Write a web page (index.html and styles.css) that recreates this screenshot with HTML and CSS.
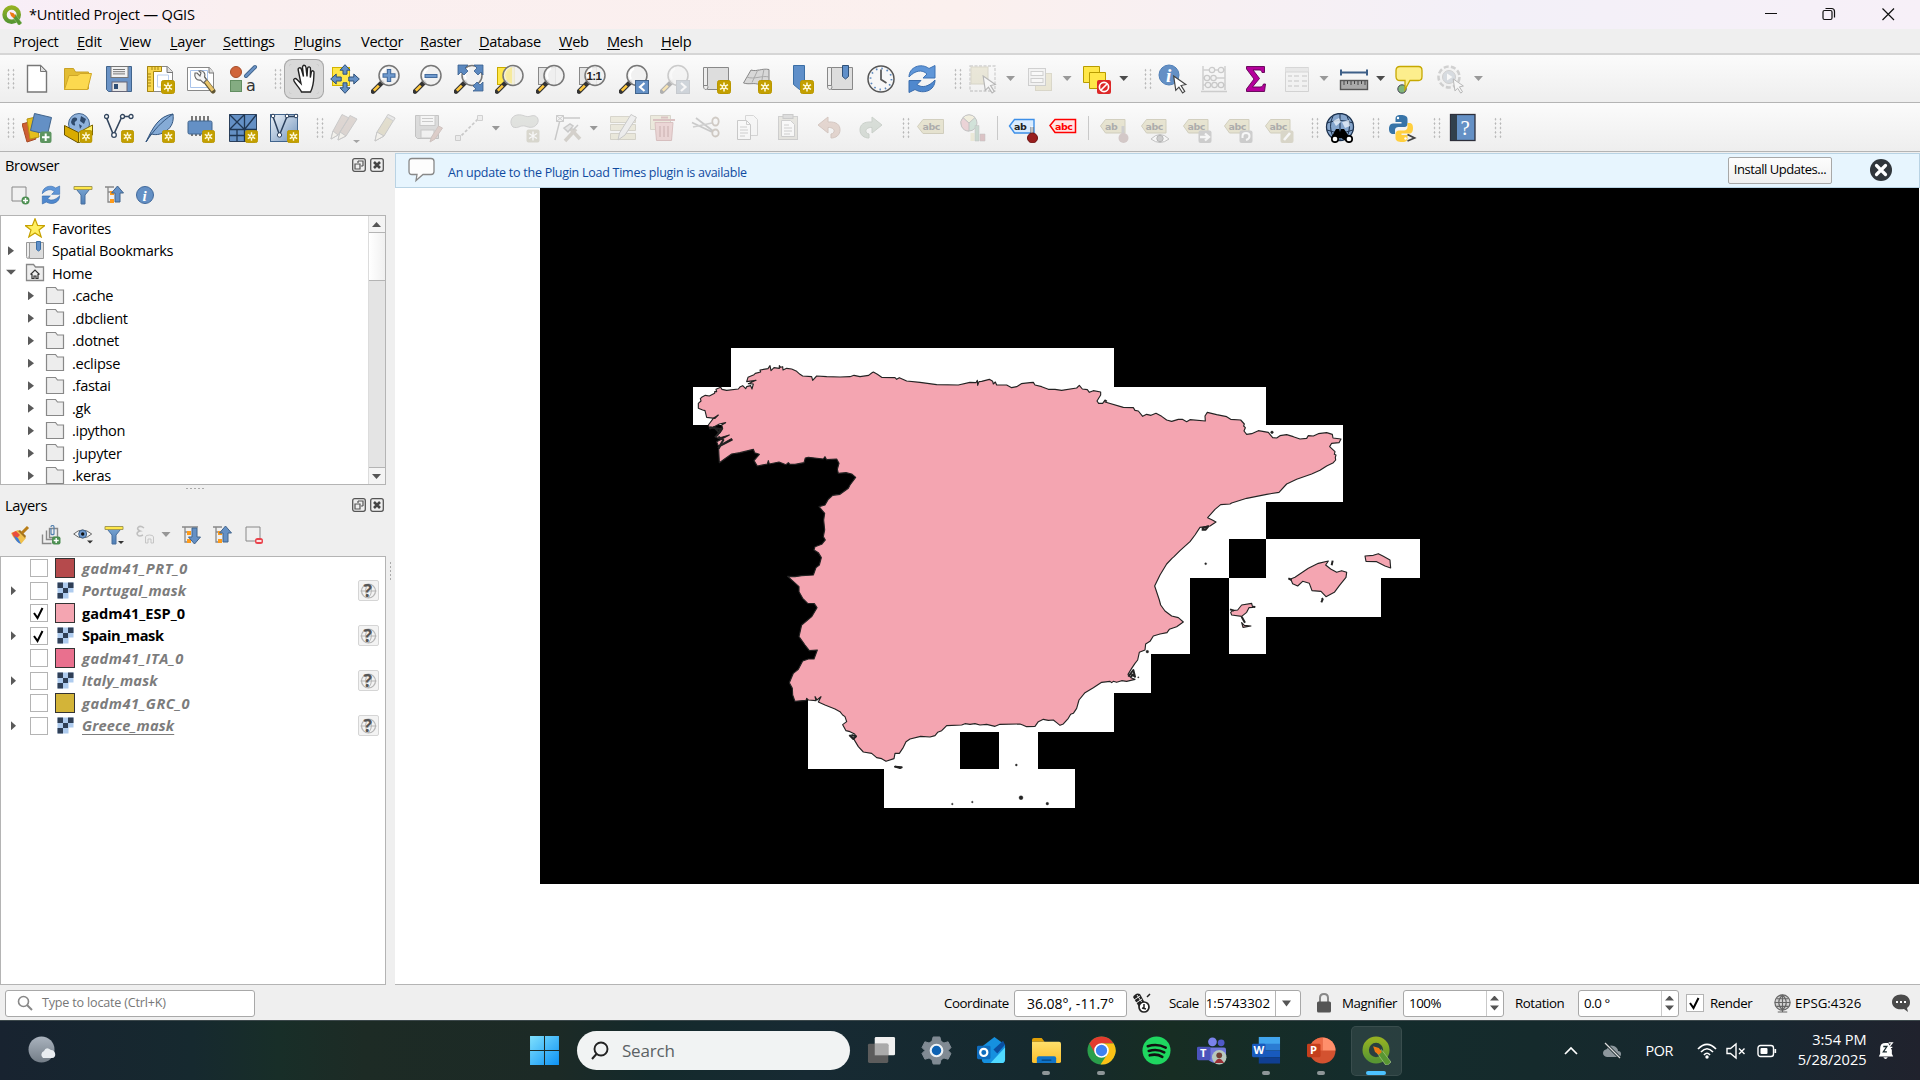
FILE: index.html
```html
<!DOCTYPE html>
<html lang="en">
<head>
<meta charset="utf-8">
<title>*Untitled Project — QGIS</title>
<link rel="stylesheet" href="styles.css">
</head>
<body>
<svg class="grads" aria-hidden="true">
<defs>
<linearGradient id="gBlue" x1="0" y1="0" x2="0" y2="1"><stop offset="0" stop-color="#7ba6d3"/><stop offset="1" stop-color="#4f7fb7"/></linearGradient>
<linearGradient id="gPale" x1="0" y1="0" x2="1" y2="1"><stop offset="0" stop-color="#eef3f9"/><stop offset="1" stop-color="#7295bd"/></linearGradient>
<linearGradient id="gQ" x1="0" y1="0" x2="0" y2="1"><stop offset="0" stop-color="#93b023"/><stop offset="1" stop-color="#589632"/></linearGradient>
<linearGradient id="gMoon" x1="0" y1="0" x2="0" y2="1"><stop offset="0" stop-color="#aab3be"/><stop offset="1" stop-color="#737d87"/></linearGradient>
<linearGradient id="gWin" x1="0" y1="0" x2="1" y2="1"><stop offset="0" stop-color="#7fe0fd"/><stop offset="1" stop-color="#0d92f4"/></linearGradient>
<linearGradient id="gFold" x1="0" y1="0" x2="0" y2="1"><stop offset="0" stop-color="#ffdf6b"/><stop offset="1" stop-color="#fbbf2b"/></linearGradient>
</defs>
</svg>
<svg class="defs" aria-hidden="true">
<symbol id="star" viewBox="0 0 14 14"><rect x=".5" y=".5" width="13" height="13" rx="2" fill="#c4a000" stroke="#b99700"/><path d="M7 2.500v9M3 4.700l8 4.600M11 4.700L3 9.300" stroke="#fffbe0" stroke-width="1.500"/><circle cx="7" cy="7" r="2.300" fill="#fffbe0"/><circle cx="7" cy="7" r="1.100" fill="#c4a000"/></symbol>
<symbol id="new" viewBox="0 0 30 30"><path d="M5.500 1.500h13l6 6v20.500h-19z" fill="#fff" stroke="#777" stroke-width="1.400"/><path d="M18.500 1.500v6h6z" fill="#ddd" stroke="#777"/></symbol>
<symbol id="open" viewBox="0 0 30 30"><path d="M1.500 25.500V4.500h9l2 3.500h13v17z" fill="#e3bd33" stroke="#c9a227"/><path d="M1.500 25.500L6 11.500h9l2-2h11.500l-4 16z" fill="#fcd94f" stroke="#d0a727"/></symbol>
<symbol id="save" viewBox="0 0 30 30"><path d="M2.500 2.500h25v25h-23l-2-2z" fill="#6a93c6" stroke="#41648c"/><rect x="7" y="2.500" width="17" height="11" fill="#f2f2f2" stroke="#777"/><path d="M9 5.500h12M9 7.700h12M9 9.900h12" stroke="#777"/><rect x="8" y="18" width="15" height="9.500" fill="#e6e6e6" stroke="#667"/><rect x="10" y="20" width="4" height="5" fill="#2f4e74"/></symbol>
<symbol id="layout" viewBox="0 0 30 30"><path d="M2.500 2.500h20l5 5v20h-25z" fill="#fff" stroke="#888"/><path d="M22 2.500v6h6" fill="#ddd" stroke="#777"/><path d="M2.500 2.500h14v5h-8v20h-6z" fill="#f8d64c" stroke="#a58511"/><path d="M7 3v3M10 3v3M13 3v3M3 10h3M3 13h3M3 16h3M3 19h3M3 22h3" stroke="#a58511"/><path d="M12.500 11h11v12h-11z" fill="#fff" stroke="#bcd0ee"/><use href="#star" x="16" y="16" width="14" height="14"/></symbol>
<symbol id="layman" viewBox="0 0 30 30"><path d="M1.500 3.500h22l4 5v18h-26z" fill="#fff" stroke="#888"/><path d="M23 3.500v5.500h5" fill="#ddd" stroke="#777"/><path d="M4.500 6.500h17v17h-17z" fill="none" stroke="#a9c3ea"/><path d="M17 14l10 13" stroke="#5f5430" stroke-width="5" stroke-linecap="round"/><path d="M19 16l8 10.500" stroke="#e8c46a" stroke-width="3.300"/><path d="M11 9l3 3 1-3-2-2c4-1 7 2 5.500 6l2 3-3 3-3-3c-4 1-6.500-3-5.500-7z" fill="#f4f4f4" stroke="#666" stroke-width="1.100"/></symbol>
<symbol id="style" viewBox="0 0 30 30"><circle cx="8" cy="8" r="5.500" fill="#d0643a" stroke="#a54c28"/><path d="M18 12l9-9" stroke="#41648c" stroke-width="4" stroke-linecap="round"/><path d="M18 12l9-9" stroke="#6a93c6" stroke-width="2.200" stroke-linecap="round"/><rect x="2.500" y="16.500" width="11" height="11" fill="#84ac82" stroke="#628e61"/><text x="18" y="27" class="t-a">a</text></symbol>
<symbol id="hand" viewBox="0 0 30 30"><path transform="translate(2.500 0)" d="M10 28c-1-3-6-8-7.500-11-1-2 1-3.500 3-1.500l4 4L6.800 6.500c-.8-3 2.400-3.800 3.200-1l2 7-1-9c0-3 3-3 3.500 0l1 9 .5-8c.5-2.500 3.200-2 3 .5l-.2 8.500 1-5.500c.8-2 3-1.500 2.700 1-.5 5 .5 11-3.500 19z" fill="#fff" stroke="#222" stroke-width="1.400"/></symbol>
<symbol id="pansel" viewBox="0 0 30 30"><rect x="2.500" y="3.500" width="17" height="18" fill="#ffe748" stroke="#d4b400"/><path d="M15 .7l5 5.500h-3v4h-4v-4h-3zM15 29.300l5-5.500h-3v-5h-4v5h-3zM.7 15l5.500-5v3h5v4h-5v3zM29.300 15l-5.500-5v3h-5v4h5v3z" fill="#6490c5" stroke="#2e5078"/></symbol>
<symbol id="mag" viewBox="0 0 30 30"><path d="M2 27.500l9-9" stroke="#333" stroke-width="4.600" stroke-linecap="round"/><path d="M2.800 26.700l5-5" stroke="#ffc83d" stroke-width="2.600"/><circle cx="18" cy="11.500" r="10" fill="#f0f0f0" fill-opacity=".88" stroke="#777" stroke-width="1.500"/><path d="M12 15a7.500 7.500 0 0 1 3-10.500" stroke="#fff" stroke-width="2" fill="none"/></symbol>
<symbol id="zin" viewBox="0 0 30 30"><use href="#mag" width="30" height="30"/><path d="M18 5v13M11.500 11.500h13" stroke="#41699b" stroke-width="4.400"/><path d="M18 6v11M12.500 11.500h11" stroke="#6f9ace" stroke-width="2.400"/></symbol>
<symbol id="zout" viewBox="0 0 30 30"><use href="#mag" width="30" height="30"/><path d="M11.500 12h13" stroke="#41699b" stroke-width="4"/><path d="M12.500 12h11" stroke="#6f9ace" stroke-width="2.200"/></symbol>
<symbol id="zfull" viewBox="0 0 30 30"><use href="#mag" width="30" height="30"/><path d="M5 1h9l-3 3 3 3-4 4-3-3-3 3V1zM29 1h-9l3 3-3 3 4 4 3-3 2 3zM29 27v-9l-3 3-3-3-4 4 3 3-3 2z" fill="#5b88bf" stroke="#3a5f8e" stroke-width=".8"/></symbol>
<symbol id="zsel" viewBox="0 0 30 30"><rect x="2.500" y="3.500" width="17" height="17" fill="#ffe748" stroke="#c9aa00"/><use href="#mag" width="30" height="30"/><path d="M17 3.500v16a8.500 8.500 0 0 1-7-8c0-4 3-8 7-8z" fill="#f6e98c" opacity=".8"/></symbol>
<symbol id="zlay" viewBox="0 0 30 30"><rect x="2.500" y="3.500" width="17" height="17" fill="#e4e4e4" stroke="#888"/><use href="#mag" width="30" height="30"/></symbol>
<symbol id="znat" viewBox="0 0 30 30"><rect x="2.500" y="3.500" width="17" height="17" fill="#e4e4e4" stroke="#888"/><use href="#mag" width="30" height="30"/><text x="9.500" y="16" class="t-11">1:1</text></symbol>
<symbol id="zlast" viewBox="0 0 30 30"><use href="#mag" width="30" height="30"/><rect x="16.500" y="16.500" width="13" height="13" fill="#6490c5" stroke="#41648c"/><path d="M25.500 19l-4.500 4 4.500 4" fill="none" stroke="#fff" stroke-width="2.200"/></symbol>
<symbol id="znext" viewBox="0 0 30 30"><use href="#mag" width="30" height="30"/><rect x="16.500" y="16.500" width="13" height="13" fill="#8d9cad" stroke="#76818e"/><path d="M21 19l4.500 4-4.500 4" fill="none" stroke="#fff" stroke-width="2.200"/></symbol>
<symbol id="mapv" viewBox="0 0 30 30"><path d="M6.500 3.500h21v22h-21z" fill="#ddd" stroke="#888"/><path d="M2.500 3.500h4v18h-4zM2.500 21c-.5 6 4.500 5.500 4.500 1.500" fill="#eee" stroke="#888"/></symbol>
<symbol id="newmap" viewBox="0 0 30 30"><use href="#mapv" width="30" height="30"/><use href="#star" x="16" y="16" width="14" height="14"/></symbol>
<symbol id="map3d" viewBox="0 0 30 30"><path d="M9 6c6 2 11-2 18-.5V20l-9 1C12 18 8 21 1.500 19z" fill="#d8d8d8" stroke="#888"/><path d="M5 13c7 3 15-2 22 0M16 5.500l-6 13M22 5l-3 16" stroke="#aaa" fill="none"/><use href="#star" x="16" y="16" width="14" height="14"/></symbol>
<symbol id="bmk" viewBox="0 0 30 30"><path d="M9.500 1.500h11v25l-5-1-6-5z" fill="#5f8fc9" stroke="#3a6ea5"/><use href="#star" x="16" y="16" width="14" height="14"/></symbol>
<symbol id="bmks" viewBox="0 0 30 30"><use href="#mapv" width="30" height="30"/><path d="M17.500 1.500h6v11l-3 2.500-3-2.500z" fill="#5f8fc9" stroke="#2e5078"/></symbol>
<symbol id="clock" viewBox="0 0 30 30"><circle cx="15" cy="15" r="13" fill="#f7f7f7" stroke="#555" stroke-width="1.500"/><circle cx="15" cy="15" r="10.500" fill="none" stroke="#5b88bf" stroke-width="1.800" stroke-dasharray="1.500 4"/><path d="M15 5.500v10l5.500 3.500" fill="none" stroke="#555" stroke-width="1.700"/></symbol>
<symbol id="refresh" viewBox="0 0 30 30"><path d="M2 13C2 3 14-1.500 22 4.500L28 1.500V14H16l4-4C15 5 8 6.500 2 13z" fill="#5f96d8" stroke="#3f73b4"/><path d="M28 16c0 11-12 14.500-20 9.500L2 28.500V16.500H14l-4 4c5 4 12 2 18-4.500z" fill="#4f88ce" stroke="#3a6cac"/></symbol>
<symbol id="cur" viewBox="0 0 14 18"><path d="M1 1l11.500 8-4.500 1 3.500 5.500-2 1.500L6 11.500 3 14.500z" fill="#fff" stroke="#444" stroke-width="1.100"/></symbol>
<symbol id="select" viewBox="0 0 30 30"><rect x="2" y="2" width="25" height="25" fill="none" stroke="#888" stroke-width="1.300" stroke-dasharray="3 1.500"/><rect x="3" y="3" width="17" height="17" fill="#d2caa0" stroke="#a39c78"/><use href="#cur" x="13" y="11" width="17" height="19"/></symbol>
<symbol id="selval" viewBox="0 0 30 30"><rect x="10.500" y="9.500" width="16" height="17" fill="#d8cf9d" stroke="#aaa27b"/><rect x="3.500" y="4.500" width="17" height="17" fill="#eee" stroke="#888"/><rect x="6" y="7.500" width="12" height="4" fill="#fff" stroke="#888"/><rect x="6" y="14.500" width="12" height="4" fill="#fff" stroke="#888"/></symbol>
<symbol id="desel" viewBox="0 0 30 30"><path d="M1.500 2.500h16v16h-16z" fill="#ffe748" stroke="#b89c00"/><path d="M7.500 8.500h16v16h-16z" fill="#ffe748" stroke="#b89c00"/><rect x="15" y="16" width="14" height="14" rx="2" fill="#dc2828"/><circle cx="22" cy="23" r="4.600" fill="none" stroke="#fff" stroke-width="1.700"/><path d="M25 20l-6 6" stroke="#fff" stroke-width="1.700"/></symbol>
<symbol id="ident" viewBox="0 0 30 30"><circle cx="11" cy="11" r="10" fill="#6490c5" stroke="#5180b8"/><text x="8" y="18" class="t-i">i</text><use href="#cur" x="14" y="11" width="16" height="19"/></symbol>
<symbol id="abac" viewBox="0 0 30 30"><path d="M4 2v24M26 2v24M4 6h22M4 14h22M4 21h22M2 27.500h26" stroke="#888" stroke-width="1.500"/><g fill="#eee" stroke="#777" stroke-width="1.200"><circle cx="13" cy="6" r="2.700"/><circle cx="22" cy="6" r="2.700"/><circle cx="8" cy="14" r="2.700"/><circle cx="14.500" cy="14" r="2.700"/><circle cx="9" cy="21" r="2.700"/><circle cx="15.500" cy="21" r="2.700"/><circle cx="22" cy="21" r="2.700"/></g></symbol>
<symbol id="sigma" viewBox="0 0 30 30"><path d="M5.500 2.500h18v6H21c-.5-2-1-2.500-3-2.500h-6l6.500 8.500-7 8.500h7.500c2 0 2.700-1 3.500-3h2l-1 7.500h-18V25l7.500-10-7.500-10z" fill="#b5009b" stroke="#5f0052" stroke-width=".9"/></symbol>
<symbol id="table" viewBox="0 0 30 30"><path d="M3.500 3.500h23v24h-23z" fill="#eee" stroke="#999"/><path d="M3.500 4h23v4h-23z" fill="#ccc"/><path d="M3.500 8h23" stroke="#999"/><path d="M6 12h4M12 12h5M20 12h5M6 17h4M12 17h5M20 17h5M6 22h4M12 22h5M20 22h5" stroke="#999" stroke-width="1.500"/></symbol>
<symbol id="ruler" viewBox="0 0 30 30"><path d="M2 8.500h26M2 5.500v6M28 5.500v6" stroke="#3d5f87" stroke-width="2"/><rect x="1.500" y="16.500" width="27" height="9" fill="#aaa" stroke="#555" stroke-width="1.400"/><path d="M5 17v4M8.500 17v3M12 17v4M15.500 17v3M19 17v4M22.500 17v3M26 17v4" stroke="#444"/></symbol>
<symbol id="tip" viewBox="0 0 30 30"><circle cx="7" cy="25" r="4.200" fill="#7fb57b" stroke="#445" /><path d="M5 2.500h18.500q3.500 0 3.500 4v6q0 4-3.500 4H15l-5 9V16.500H5q-4 0-4-4v-6q0-4 4-4z" fill="#fcee8d" stroke="#c6a800" stroke-width="1.300"/></symbol>
<symbol id="gearact" viewBox="0 0 30 30"><circle cx="13" cy="13" r="10.500" fill="#eee" stroke="#888" stroke-width="2.500" stroke-dasharray="5 2.300"/><circle cx="13" cy="13" r="6.500" fill="#9daab8" stroke="#888"/><path d="M11 9.500l5.500 3.500-5.500 3.500z" fill="#fff"/><use href="#cur" x="15" y="14" width="15" height="16"/></symbol>

<symbol id="dsm" viewBox="0 0 30 30"><path d="M0 11l7-2 7 17-9 3z" fill="#cf5f33" stroke="#a64a26"/><path d="M5 6l9-2 3 20-9 2z" fill="#e5be1d" stroke="#b59410"/><path d="M12.500.5l17 4-4 17-17-4z" fill="#6490c5" stroke="#41648c"/><rect x="18" y="18.500" width="11.500" height="11.500" rx="2" fill="#5d9560"/><path d="M23.700 20.500v7.500M20 24.200h7.500" stroke="#fff" stroke-width="2"/></symbol>
<symbol id="gpkg" viewBox="0 0 30 30"><circle cx="16" cy="11" r="10.500" fill="#8fb2dc" stroke="#45678f"/><path d="M9 6c3-3 6-1 5 1s-3 1-2 4-4 1-4-2zM18 3l5 3-2 5-4-3zM16 11l3 2-2 3z" fill="#2f4a6c"/><path d="M1.500 12.500l14 7v10.500l-14-8z" fill="#d9ab00" stroke="#685300"/><path d="M15.500 19.500l14-7.500v10l-14 8z" fill="#ffef62" stroke="#7d6600"/><use href="#star" x="16.500" y="17" width="13" height="13"/></symbol>
<symbol id="shp" viewBox="0 0 30 30"><path d="M2 3.500L9.500 22 18 3.500h9" fill="none" stroke="#33465e" stroke-width="1.600"/><g fill="#fff" stroke="#33465e" stroke-width="1.300"><circle cx="2.500" cy="3.500" r="2"/><circle cx="10" cy="22" r="2.300"/><circle cx="18.500" cy="3.500" r="2"/><circle cx="27" cy="3.500" r="2"/></g><use href="#star" x="17" y="17" width="13" height="13"/></symbol>
<symbol id="spl" viewBox="0 0 30 30"><path d="M1 29C8 14 14 3 28 1c1 7-1 13-7 17l-2 1c-4 3-9 3-13 2z" fill="#85abd6" stroke="#33557e"/><path d="M1 29C9 17 16 9 28 1" fill="none" stroke="#33557e"/><use href="#star" x="17" y="17" width="13" height="13"/></symbol>
<symbol id="mem" viewBox="0 0 30 30"><path d="M6 3v20M10 3v20M14 3v20M18 3v20M22 3v10" stroke="#444" stroke-width="1.400"/><rect x="2" y="8" width="24" height="13" rx="1.500" fill="#6490c5" stroke="#41648c"/><use href="#star" x="16" y="17" width="13" height="13"/></symbol>
<symbol id="mesh" viewBox="0 0 30 30"><path d="M1.500 1.500h27v27h-27z" fill="#6490c5" stroke="#2b405c"/><path d="M1.500 1.500l15 15M16.500 1.500l-15 15M28.500 1.500l-12 15M1.500 16.500h27M16.500 1.500v27M1.500 22.500h15M9 16.500v12" stroke="#1f3652" stroke-width="1.300"/><use href="#star" x="17" y="17" width="13" height="13"/></symbol>
<symbol id="virt" viewBox="0 0 30 30"><rect x="1.500" y="1.500" width="27" height="27" fill="url(#gPale)" stroke="#41648c"/><path d="M4 3.500L10.500 22 18 3.500h9" fill="none" stroke="#2b405c" stroke-width="1.500"/><circle cx="10.500" cy="22" r="2.200" fill="#fff" stroke="#2b405c"/><circle cx="4" cy="3" r="1.800" fill="#fff" stroke="#2b405c"/><circle cx="18" cy="3" r="1.800" fill="#fff" stroke="#2b405c"/><circle cx="27" cy="3" r="1.800" fill="#fff" stroke="#2b405c"/><use href="#star" x="18" y="17" width="13" height="13"/></symbol>
<symbol id="pen" viewBox="0 0 30 30"><path d="M4 28l2-9L17 1.500l7 3.500-11 18z" fill="#bdb183" stroke="#777"/><path d="M4 28l2-9 7 4z" fill="#f4efe0" stroke="#777"/><path d="M17 1.500l7 3.500-1.500 3-7-4z" fill="#ccc" stroke="#888"/></symbol>
<symbol id="pens" viewBox="0 0 30 30"><path d="M1 26l2-8L12 1.500l7 3.500-11 17zM8 27l2-8L20 2.500l7 3.500-11 17z" fill="#b09a90" stroke="#777"/><path d="M1 26l2-8 5 4zM8 27l2-8 6 4z" fill="#f4efe0" stroke="#777"/><path d="M23 27h7l-3.500 3z" fill="#111"/></symbol>
<symbol id="saveed" viewBox="0 0 30 30"><path d="M2.500 2.500h23v23h-21l-2-2z" fill="#aaa" stroke="#666"/><rect x="7" y="2.500" width="15" height="10" fill="#f4f4f4" stroke="#777"/><path d="M9 5.500h11M9 8.500h11" stroke="#777"/><rect x="8" y="17" width="13" height="8" fill="#eee" stroke="#777"/><path d="M17 29l1.500-5 7-11 4 2-7.500 11z" fill="#b28679" stroke="#8a6a60"/></symbol>
<symbol id="digi" viewBox="0 0 30 30"><path d="M4 26L26 4" stroke="#777" stroke-width="1.700" stroke-dasharray="3 2"/><path d="M1.500 22.500h5v5h-5zM23.500 2.500h5v5h-5z" fill="#ddd" stroke="#888"/></symbol>
<symbol id="poly" viewBox="0 0 30 30"><path d="M7 2c7-1 8 3 14 1s9 4 6 8-7 4-12 2c-5-1-7 3-12 1C-1 10 1 3 7 2z" fill="#b8bdb4" stroke="#888"/><rect x="16.500" y="16.500" width="13" height="13" rx="2" fill="#a8a38a"/><path d="M23 18.500v9M19 20.500l8 5M27 20.500l-8 5" stroke="#fff" stroke-width="1.400"/></symbol>
<symbol id="vert" viewBox="0 0 30 30"><path d="M3 27L8 7M10 5h18" stroke="#777" stroke-width="1.400"/><path d="M4.500 2.500h7v6h-7zM4.500 2.500l7 6M11.500 2.500l-7 6" fill="#eee" stroke="#777"/><path d="M13 28l11-12M28 26L16 13" stroke="#999080" stroke-width="3.500"/><path d="M12 15l6-4 3 2-5 6zM21 17l5-5" stroke="#777" fill="#ccc" stroke-width="1.500"/></symbol>
<symbol id="attr" viewBox="0 0 30 30"><path d="M2.500 3.500h25v6h-25zM2.500 11.500h25v6h-25zM2.500 20.500h25v6h-25z" fill="#d9d2ae" stroke="#9b957a"/><path d="M10 27l1.500-7L23 1.500l5.500 3L17 22z" fill="#e0e0e0" stroke="#777"/></symbol>
<symbol id="trash" viewBox="0 0 30 30"><path d="M1.500 2.500h20v14h-20z" fill="#d9d2ae" stroke="#9b957a"/><path d="M6 9.500h18l-1.500 18h-15z" fill="#d99b9b" stroke="#a55f5f"/><path d="M4 7h22M11 13v11M15 13v11M19 13v11M12 4.500h7" stroke="#a55f5f" stroke-width="1.800"/></symbol>
<symbol id="cut" viewBox="0 0 30 30"><path d="M1 9.500l20 9.500M5 5l17 13" stroke="#777" stroke-width="1.700"/><path d="M2 14l19-4" stroke="#888" stroke-width="1.700"/><ellipse cx="24.500" cy="8.500" rx="3.200" ry="4" fill="none" stroke="#876" stroke-width="1.800"/><ellipse cx="24.500" cy="20" rx="3.200" ry="3.500" fill="none" stroke="#876" stroke-width="1.800"/></symbol>
<symbol id="copy" viewBox="0 0 30 30"><path d="M13.500 2.500h8l4 4v16h-12z" fill="#f6f6f6" stroke="#999"/><path d="M5.500 7.500h9l4 4v15h-13z" fill="#fff" stroke="#777"/><path d="M14.500 7.500v4h4M8 14h7M8 17h8M8 20h8M8 23h5" stroke="#888" fill="none"/></symbol>
<symbol id="paste" viewBox="0 0 30 30"><rect x="5.500" y="3.500" width="19" height="23" fill="#c9c6b8" stroke="#888"/><rect x="10" y="1.500" width="10" height="4" fill="#aaa" stroke="#777"/><path d="M8.500 7.500h9l4 4v12h-13z" fill="#fff" stroke="#888"/><path d="M11 12h5M11 15h8M11 18h8M11 21h6" stroke="#888"/></symbol>
<symbol id="undo" viewBox="0 0 30 30"><path d="M4 12l10-8v5c9-.5 12 3 12 8 0 5-4 8-9 8v-4c5-1 4-7-3-6.500V20z" fill="#c29a88" stroke="#96705f"/></symbol>
<symbol id="redo" viewBox="0 0 30 30"><path d="M26 12L16 4v5C7 8.500 4 12 4 17c0 5 4 8 9 8v-4c-5-1-4-7 3-6.500V20z" fill="#9fb09f" stroke="#7b8c7b"/></symbol>
<symbol id="tag" viewBox="0 0 30 30"><path d="M.5 13.500L6 6.500h20.500v14H6z" fill="#ccc28c" stroke="#8f8757"/><text x="5.500" y="17" class="t-abc">abc</text></symbol>
<symbol id="diag" viewBox="0 0 30 30"><circle cx="11" cy="10" r="8" fill="#8fbfa5" stroke="#666"/><path d="M11 10V18A8 8 0 0 1 5 4.500z" fill="#d8939c" stroke="#666"/><path d="M11 10l-6-5.500A8 8 0 0 1 17 4.500z" fill="#e6dfb0" stroke="#666"/><path d="M12.500 20h4v8h-4z" fill="#ddd6a5"/><path d="M17 12.500h4V28h-4z" fill="#7aa58f" stroke="#666" stroke-width=".5"/><path d="M22 21h5v7h-5z" fill="#b06a70" stroke="#666" stroke-width=".5"/></symbol>
<symbol id="tagpin" viewBox="0 0 30 30"><path d="M1.500 13L6.500 6.500H26v13.500H6.500z" fill="#d9ecff" stroke="#3d8fe8" stroke-width="1.400"/><text x="6" y="17" class="t-abc">ab</text><path d="M24 14v10" stroke="#666" stroke-width="3"/><path d="M24 13v10" stroke="#fff" stroke-width="1.200"/><circle cx="24.500" cy="25" r="5" fill="#981e1e" stroke="#6c1111"/></symbol>
<symbol id="tagred" viewBox="0 0 30 30"><path d="M1 12.500L6 6.500h20.500v13H6z" fill="#ffe3e3" stroke="#f00" stroke-width="1.500"/><text x="6" y="16.500" class="t-red">abc</text></symbol>
<symbol id="tagb" viewBox="0 0 30 30"><path d="M1.500 13L6.500 6.500H26v13.500H6.500z" fill="#ccc28c" stroke="#8f8757"/><text x="5.500" y="17" class="t-abc">abc</text></symbol>
<symbol id="tg1" viewBox="0 0 30 30"><path d="M1.500 13L6.500 6.500H26v13.500H6.500z" fill="#ccc28c" stroke="#8f8757"/><text x="6" y="17" class="t-abc">ab</text><path d="M24 13v8" stroke="#888" stroke-width="3"/><circle cx="24.500" cy="25" r="5" fill="#9a7a78"/></symbol>
<symbol id="tg2" viewBox="0 0 30 30"><use href="#tagb" width="30" height="30"/><path d="M11 26q9-9 18 0q-9 7-18 0z" fill="#fff" stroke="#666"/><circle cx="20" cy="25.500" r="3.200" fill="#888" stroke="#444"/></symbol>
<symbol id="tg3" viewBox="0 0 30 30"><use href="#tagb" width="30" height="30"/><rect x="16.500" y="17.500" width="13" height="12.500" rx="2" fill="#888"/><path d="M18 24h8M23 20.500l4 3.500-4 3.500" stroke="#fff" stroke-width="2.300" fill="none"/></symbol>
<symbol id="tg4" viewBox="0 0 30 30"><use href="#tagb" width="30" height="30"/><rect x="16.500" y="17.500" width="13" height="12.500" rx="2" fill="#888"/><path d="M19.500 25v-2q0-3 3.500-3t3.500 3-3.500 4" stroke="#fff" stroke-width="2" fill="none"/></symbol>
<symbol id="tg5" viewBox="0 0 30 30"><use href="#tagb" width="30" height="30"/><rect x="16.500" y="17.500" width="13" height="12.500" rx="2" fill="#a9a17a"/><path d="M20 27l6-7" stroke="#fff" stroke-width="2.600"/></symbol>
<symbol id="meta" viewBox="0 0 30 30"><circle cx="15" cy="14" r="13.500" fill="#86a6cd" stroke="#1d3350" stroke-width="1.300"/><path d="M2 10q13-5 26 0M2 17q13 5 26 0M15 1v26M8 3q-5 10 0 21M22 3q5 10 0 21" stroke="#1d3350" fill="none"/><path d="M8 8l6-3 2 4-5 4zM17 9l7-2 1 6-5 2z" fill="#e8f0fa" opacity=".8"/><path d="M6 25l5-9h3l1 3 1-3h3l6 9-4 3-5-3h-3l-4 3z" fill="#000"/><circle cx="10" cy="26" r="3.200" fill="#fff" stroke="#000" stroke-width="1.700"/><circle cx="24" cy="26" r="3.200" fill="#fff" stroke="#000" stroke-width="1.700"/></symbol>
<symbol id="py" viewBox="0 0 30 30"><path d="M14 2c-5 0-5.500 2-5.500 4v3h6v1.500H6c-3 0-4 3-4 5.500s1 5 4 5h2v-4c0-2 1.500-3 3.500-3h6c2 0 3-1.500 3-3V6c0-3-3-4-6.500-4z" fill="#3774a8"/><path d="M15 29c5 0 5.500-2 5.500-4v-3h-6v-1.500H22c3 0 4-2 4-5.500s-1-5-4-5h-1.500v4c0 2-1.500 3.500-3.500 3.500h-5c-2 0-3.500 1.500-3.500 3V25c0 3 3 4 6.500 4z" fill="#ffcf3f"/><circle cx="11" cy="5" r="1.200" fill="#fff"/><circle cx="18.500" cy="25.500" r="1.200" fill="#fff"/><path d="M20.500 21.500l7 3.500-7 3" fill="none" stroke="#444" stroke-width="1.800"/></symbol>
<symbol id="help" viewBox="0 0 30 30"><rect x="2.500" y="1.500" width="24.500" height="26" fill="#6490c5" stroke="#2d2f3b" stroke-width="1.300"/><path d="M3 2h6v25H3z" fill="#31404d"/><text x="12.500" y="22" class="t-q">?</text></symbol>

<symbol id="addsel" viewBox="0 0 20 20"><path d="M2 2h14v14H2z" fill="#f0f0f0" stroke="#888"/><circle cx="15.500" cy="15.500" r="4" fill="#4d8f52"/><path d="M15.500 13v5M13 15.500h5" stroke="#fff" stroke-width="1.500"/></symbol>
<symbol id="remsel" viewBox="0 0 20 20"><path d="M2 2h14v14H2z" fill="#f0f0f0" stroke="#888"/><rect x="11" y="13" width="8" height="6" rx="2.500" fill="#e9434c"/><path d="M12.500 16h5" stroke="#fff" stroke-width="1.700"/></symbol>
<symbol id="funnel" viewBox="0 0 20 20"><path d="M1.500 2h17L12 10v9H8v-9z" fill="url(#gBlue)" stroke="#486f9e"/><path d="M1 1.500h18v3H1z" fill="#ffe748" stroke="#a39a55"/></symbol>
<symbol id="funnelm" viewBox="0 0 20 20"><use href="#funnel" width="20" height="20"/><path d="M14 16h6l-3 3z" fill="#333"/></symbol>
<symbol id="tup" viewBox="0 0 20 20"><path d="M1 2h9M4 2v15h4M4 7h4" stroke="#888" fill="none" stroke-width="1.300"/><rect x="6" y="6" width="4" height="4" fill="#ff9b1a"/><rect x="6" y="14" width="4" height="4" fill="#ff9b1a"/><path d="M13.500 1l6 7h-3.500v9h-5V8H7.500z" fill="#6490c5" stroke="#41648c"/></symbol>
<symbol id="tdn" viewBox="0 0 20 20"><path d="M1 2h16M4 2v15h4M4 7h4" stroke="#888" fill="none" stroke-width="1.300"/><rect x="6" y="6" width="4" height="4" fill="#ff9b1a"/><rect x="6" y="14" width="4" height="4" fill="#ff9b1a"/><path d="M13.500 19l6-7h-3.500V3h-5v9H7.500z" fill="#6490c5" stroke="#41648c"/></symbol>
<symbol id="inf" viewBox="0 0 20 20"><circle cx="10" cy="10" r="8.500" fill="#6490c5" stroke="#41699b"/><text x="7.500" y="15.500" class="t-i2">i</text></symbol>
<symbol id="brush" viewBox="0 0 20 20"><path d="M1 8l7-3 8 8-5 6C7 17 3 13 1 8z" fill="#f0c04c"/><path d="M2 8l4-2 4 4-4 4C4 12 3 11 2 8z" fill="#e94e3d"/><path d="M4 11l4 2 3 6C8 18 5 15 4 11z" fill="#3d7bd6"/><path d="M8 6l2-1 6 6-1 2z" fill="#a07320"/><path d="M12 8l6-6" stroke="#b97d17" stroke-width="3"/></symbol>
<symbol id="addgrp" viewBox="0 0 20 20"><path d="M1.500 9.500v9h9M5.500 5.500v9h8M8.500 3.500h8v9h-8z" fill="none" stroke="#888" stroke-width="1.400"/><path d="M10 3v6a2 2 0 0 0 3 0V2a1.500 1.500 0 0 0-3 0" fill="none" stroke="#5480ae" stroke-width="1.200"/><rect x="11" y="11.500" width="8.500" height="8" rx="2" fill="#4d8f52"/><path d="M15.200 13v5M12.700 15.500h5" stroke="#fff" stroke-width="1.400"/></symbol>
<symbol id="eye" viewBox="0 0 20 20"><path d="M.7 9q8.500-8 18 0q-9 8-18 0z" fill="#f5f5f5" stroke="#666"/><circle cx="9.700" cy="9" r="4" fill="#6f9ace" stroke="#41648c"/><circle cx="9.700" cy="9" r="1.700" fill="#111"/><path d="M14 15.500h6l-3 3z" fill="#333"/></symbol>
<symbol id="eps" viewBox="0 0 20 20"><path d="M9 3C4-1 0 4 5 6 0 7 2 13 8 10" fill="none" stroke="#666" stroke-width="1.600"/><path d="M10.500 18v-6q0-2 4-2t4 2v6h-2.500v-4h-3v4z" fill="#eee" stroke="#777"/></symbol>
<symbol id="fav" viewBox="0 0 20 20"><path d="M10 .8l2.600 6.600 7 .3-5.600 4.300 2.200 7L10 15l-6.200 4 2.200-7L.4 7.700l7-.3z" fill="#ffef62" stroke="#c6a100" stroke-width="1.200"/></symbol>
<symbol id="bk" viewBox="0 0 20 20"><path d="M4.500 1.500h14v16h-14z" fill="#ddd" stroke="#999"/><path d="M1.500 1.500h3v14c-1 0-2 1-1 2-2 0-2-1-2-2z" fill="#eee" stroke="#999"/><path d="M11.500.5h4v8l-2 1.500-2-1.500z" fill="#5f8fc9" stroke="#3a6ea5"/></symbol>
<symbol id="homef" viewBox="0 0 20 20"><path d="M1.500 1.500h7l2 2.500h8v13.500h-17z" fill="#eee" stroke="#888" stroke-width="1.300"/><path d="M5.500 11.500l4.500-4.500 4.500 4.500M7 11v4.500h2v-2.500h2v2.500h2V11" fill="none" stroke="#333" stroke-width="1.200"/></symbol>
<symbol id="folder" viewBox="0 0 20 20"><path d="M1.500 1.500h9l2 2.500h6v13.500h-17z" fill="#ededed" stroke="#888" stroke-width="1.200"/></symbol>
<symbol id="rast" viewBox="0 0 17 17"><path d="M.5.500h16v10h-5v6h-11v-11z" fill="#aecbee"/><path d="M.5.500h5.500v5.500H.500zM11 .5h5.500v5.500H11zM6 6h5v5H6zM.5 11H6v5.500H.500z" fill="#2f3f56"/></symbol>
<symbol id="q" viewBox="0 0 21 21"><rect x=".5" y=".5" width="20" height="20" rx="1.500" fill="#f3f3f3" stroke="#d5d5d5"/><circle cx="10.500" cy="11" r="7" fill="none" stroke="#b5b5b5" stroke-width="1.200"/><path d="M2.500 11h16M10.500 4q-6 6 0 14q6-8 0-14" stroke="#b5b5b5" fill="none"/><text x="5.600" y="17" class="t-crs">?</text></symbol>
<symbol id="float" viewBox="0 0 14 14"><rect x=".7" y=".7" width="12.600" height="12.600" rx="2" fill="#eee" stroke="#555" stroke-width="1.300"/><path d="M6 3h5v5M6 3v2M3 6h5v5H3zM9 8h2" fill="none" stroke="#555" stroke-width="1.200"/></symbol>
<symbol id="closed" viewBox="0 0 14 14"><rect x=".7" y=".7" width="12.600" height="12.600" rx="2" fill="#eee" stroke="#555" stroke-width="1.300"/><path d="M4 4l6 6M10 4l-6 6" stroke="#444" stroke-width="2.600"/></symbol>
<symbol id="qgis" viewBox="0 0 30 30"><circle cx="14.500" cy="14.500" r="10.700" fill="none" stroke="url(#gQ)" stroke-width="6.600"/><path d="M16 18l4-4 10 13-3.500 3h-2z" fill="#589632" stroke="#b7d59b" stroke-width=".6"/><path d="M11.500 10.500l6 2 3 4-3 3-4-3z" fill="#ee7913"/></symbol>
</svg>

<div class="app">
<header class="titlebar">
  <svg class="logo"><use href="#qgis"/></svg><span class="caption">*Untitled Project — QGIS</span>
  <svg class="wbtns" viewBox="0 0 180 29"><path d="M25 13.500h12" stroke="#111"/><rect x="83" y="10.500" width="9" height="9" rx="1.500" fill="none" stroke="#111" stroke-width="1.200"/><path d="M85.500 8.500h6q3 0 3 3v6" fill="none" stroke="#111" stroke-width="1.200"/><path d="M142.500 8.500l11.500 11.500M154 8.500L142.500 20" stroke="#111" stroke-width="1.200"/></svg>
</header>
<nav class="menu"><span>Project</span><span><u>E</u>dit</span><span><u>V</u>iew</span><span><u>L</u>ayer</span><span><u>S</u>ettings</span><span><u>P</u>lugins</span><span>Vect<u>o</u>r</span><span><u>R</u>aster</span><span><u>D</u>atabase</span><span><u>W</u>eb</span><span><u>M</u>esh</span><span><u>H</u>elp</span></nav>
<div class="toolbar">
<i class="h"></i><svg><use href="#new"/></svg><svg><use href="#open"/></svg><svg><use href="#save"/></svg><svg><use href="#layout"/></svg><svg><use href="#layman"/></svg><svg><use href="#style"/></svg>
<i class="h"></i><svg class="on"><use href="#hand"/></svg><svg><use href="#pansel"/></svg><svg><use href="#zin"/></svg><svg><use href="#zout"/></svg><svg><use href="#zfull"/></svg><svg><use href="#zsel"/></svg><svg><use href="#zlay"/></svg><svg><use href="#znat"/></svg><svg><use href="#zlast"/></svg><svg class="off"><use href="#znext"/></svg><svg><use href="#newmap"/></svg><svg><use href="#map3d"/></svg><svg><use href="#bmk"/></svg><svg><use href="#bmks"/></svg><svg><use href="#clock"/></svg><svg><use href="#refresh"/></svg>
<i class="h"></i><svg class="off"><use href="#select"/></svg><i class="d dim"></i><svg class="off"><use href="#selval"/></svg><i class="d dim"></i><svg><use href="#desel"/></svg><i class="d"></i>
<i class="h"></i><svg><use href="#ident"/></svg><svg class="off"><use href="#abac"/></svg><svg><use href="#sigma"/></svg><svg class="off"><use href="#table"/></svg><i class="d dim"></i><svg><use href="#ruler"/></svg><i class="d"></i><svg><use href="#tip"/></svg><svg class="off"><use href="#gearact"/></svg><i class="d dim"></i>
</div>
<div class="toolbar second">
<i class="h"></i><svg><use href="#dsm"/></svg><svg><use href="#gpkg"/></svg><svg><use href="#shp"/></svg><svg><use href="#spl"/></svg><svg><use href="#mem"/></svg><svg><use href="#mesh"/></svg><svg><use href="#virt"/></svg>
<i class="h"></i><svg class="off"><use href="#pens"/></svg><svg class="off"><use href="#pen"/></svg><svg class="off"><use href="#saveed"/></svg><svg class="off"><use href="#digi"/></svg><i class="d dim"></i><svg class="off"><use href="#poly"/></svg><svg class="off"><use href="#vert"/></svg><i class="d dim"></i><svg class="off"><use href="#attr"/></svg><svg class="off"><use href="#trash"/></svg><svg class="off"><use href="#cut"/></svg><svg class="off"><use href="#copy"/></svg><svg class="off"><use href="#paste"/></svg><svg class="off"><use href="#undo"/></svg><svg class="off"><use href="#redo"/></svg>
<i class="h"></i><svg class="off"><use href="#tag"/></svg><svg class="off"><use href="#diag"/></svg><i class="s"></i><svg><use href="#tagpin"/></svg><svg><use href="#tagred"/></svg><i class="s"></i><svg class="off"><use href="#tg1"/></svg><svg class="off"><use href="#tg2"/></svg><svg class="off"><use href="#tg3"/></svg><svg class="off"><use href="#tg4"/></svg><svg class="off"><use href="#tg5"/></svg>
<i class="h"></i><svg><use href="#meta"/></svg><i class="h"></i><svg><use href="#py"/></svg><i class="h"></i><svg><use href="#help"/></svg><i class="h"></i>
</div>

<main class="work">
<aside class="docks">
  <section class="dock">
    <div class="dtitle"><span>Browser</span><svg><use href="#float"/></svg><svg><use href="#closed"/></svg></div>
    <div class="dtools"><svg><use href="#addsel"/></svg><svg><use href="#refresh"/></svg><svg><use href="#funnel"/></svg><svg><use href="#tup"/></svg><svg><use href="#inf"/></svg></div>
    <div class="tree browser">
      <div class="rows">
        <div class="row"><i></i><svg><use href="#fav"/></svg><span>Favorites</span></div>
        <div class="row"><i class="c"></i><svg><use href="#bk"/></svg><span>Spatial Bookmarks</span></div>
        <div class="row"><i class="o"></i><svg><use href="#homef"/></svg><span>Home</span></div>
        <div class="row sub"><i class="c"></i><svg><use href="#folder"/></svg><span>.cache</span></div>
        <div class="row sub"><i class="c"></i><svg><use href="#folder"/></svg><span>.dbclient</span></div>
        <div class="row sub"><i class="c"></i><svg><use href="#folder"/></svg><span>.dotnet</span></div>
        <div class="row sub"><i class="c"></i><svg><use href="#folder"/></svg><span>.eclipse</span></div>
        <div class="row sub"><i class="c"></i><svg><use href="#folder"/></svg><span>.fastai</span></div>
        <div class="row sub"><i class="c"></i><svg><use href="#folder"/></svg><span>.gk</span></div>
        <div class="row sub"><i class="c"></i><svg><use href="#folder"/></svg><span>.ipython</span></div>
        <div class="row sub"><i class="c"></i><svg><use href="#folder"/></svg><span>.jupyter</span></div>
        <div class="row sub"><i class="c"></i><svg><use href="#folder"/></svg><span>.keras</span></div>
      </div>
      <div class="scroll"><b class="up"></b><b class="thumb"></b><b class="track"></b><b class="down"></b></div>
    </div>
  </section>
  <div class="split"></div>
  <section class="dock grow">
    <div class="dtitle l"><span>Layers</span><svg><use href="#float"/></svg><svg><use href="#closed"/></svg></div>
    <div class="dtools l"><svg><use href="#brush"/></svg><svg><use href="#addgrp"/></svg><svg><use href="#eye"/></svg><svg><use href="#funnelm"/></svg><svg class="off"><use href="#eps"/></svg><i class="d dim"></i><svg><use href="#tdn"/></svg><svg><use href="#tup"/></svg><svg><use href="#remsel"/></svg></div>
    <div class="tree layers">
      <div class="lay vec"><i></i><b class="ck"></b><b class="sw prt"></b><span>gadm41_PRT_0</span></div>
      <div class="lay"><i class="c"></i><b class="ck"></b><svg><use href="#rast"/></svg><span>Portugal_mask</span><svg class="q"><use href="#q"/></svg></div>
      <div class="lay vis vec"><i></i><b class="ck"><svg viewBox="0 0 17 17"><path d="M4 8l3.500 5L12.500 3" fill="none" stroke="#000" stroke-width="2"/></svg></b><b class="sw esp"></b><span>gadm41_ESP_0</span></div>
      <div class="lay vis"><i class="c"></i><b class="ck"><svg viewBox="0 0 17 17"><path d="M4 8l3.500 5L12.500 3" fill="none" stroke="#000" stroke-width="2"/></svg></b><svg><use href="#rast"/></svg><span>Spain_mask</span><svg class="q"><use href="#q"/></svg></div>
      <div class="lay vec"><i></i><b class="ck"></b><b class="sw ita"></b><span>gadm41_ITA_0</span></div>
      <div class="lay"><i class="c"></i><b class="ck"></b><svg><use href="#rast"/></svg><span>Italy_mask</span><svg class="q"><use href="#q"/></svg></div>
      <div class="lay vec"><i></i><b class="ck"></b><b class="sw grc"></b><span>gadm41_GRC_0</span></div>
      <div class="lay"><i class="c"></i><b class="ck"></b><svg><use href="#rast"/></svg><span class="cur">Greece_mask</span><svg class="q"><use href="#q"/></svg></div>
    </div>
  </section>
</aside>
<div class="vsplit"></div>
<section class="center">
  <div class="msg">
    <svg class="bub" viewBox="0 0 28 26"><path d="M4 1.500h19q3 0 3 3v10q0 3-3 3H15l-7 6 1-6H4q-3 0-3-3v-10q0-3 3-3z" fill="#fdfdfd" stroke="#888" stroke-width="1.300"/></svg>
    <span>An update to the Plugin Load Times plugin is available</span>
    <button>Install Updates...</button>
    <svg class="x" viewBox="0 0 22 22"><circle cx="11" cy="11" r="11" fill="#31363b"/><path d="M6.500 6.500l9 9M15.500 6.500l-9 9" stroke="#fff" stroke-width="3.200" stroke-linecap="round"/></svg>
  </div>
  <svg class="map" viewBox="395 188 1525 796">
    <path d="M540 188h1379v696H540z"/>
    <path fill="#fff" d="M731 348H1114V387H1266V425H1343V502H1266V539H1420V578H1381V617H1266V654H1229V578H1190V654H1151V693H1114V732H1038V769H1075V808H884V769H808V700L900 690V425H693V387H731z"/>
    <path d="M1229 539h37v39h-37zM960 732h39v37h-39z"/>
    <g transform="translate(680 340) scale(.33333)" fill="#f4a5b1" stroke="#232323" stroke-width="3.400" stroke-linejoin="round">
    <path d="M55 205L55 190 63 183 61 176 65 172 76 166 88 168 104 160 104 155 110 155 108 148 122 142 126 148 140 151 175 147 181 140 188 137 197 146 200 140 212 137 216 147 220 132 205 131 228 121 200 125 204 112 222 104 226 100 242 96 240 90 264 86 270 77 273 92 282 83 298 85 298 77 302 82 308 80 309 90 320 85 335 87 350 94 360 103 368 108 395 110 398 121 410 108 440 110 480 111 510 110 522 106 540 110 566 106 575 99 580 96 592 103 605 112 645 113 650 118 658 113 680 123 720 127 770 134 835 135 870 127 888 128 892 121 893 136 897 125 905 124 928 118 938 124 940 132 946 126 950 135 980 135 995 143 1010 140 1024 131 1050 128 1060 127 1065 135 1085 140 1105 148 1125 148 1145 151 1190 144 1198 136 1207 147 1222 149 1228 157 1240 152 1262 156 1262 165 1251 183 1256 190 1268 190 1275 180 1280 183 1275 186 1330 202 1360 203 1365 211 1375 213 1388 229 1400 223 1413 226 1428 220 1445 229 1460 240 1475 244 1495 238 1507 238 1520 245 1530 239 1576 243 1575 228 1582 217 1610 224 1640 230 1652 238 1682 240 1693 252 1691 258 1696 263 1692 273 1700 283 1715 281 1735 272 1765 277 1778 293 1790 294 1800 287 1820 284 1840 290 1860 297 1880 295 1885 287 1900 288 1915 281 1940 278 1957 283 1959 294 1983 297 1977 308 1955 310 1949 320 1965 335 1963 343 1968 345 1966 352 1967 360 1960 368 1940 378 1920 391 1895 402 1850 418 1820 432 1797 457 1760 463 1700 475 1655 489 1650 492 1622 494 1605 508 1583 533 1597 540 1608 546 1590 558 1560 562 1545 585 1530 605 1500 632 1482 650 1476 655 1460 672 1440 705 1424 738 1438 780 1442 795 1455 813 1475 828 1495 833 1510 846 1490 860 1468 868 1461 878 1440 882 1420 888 1410 904 1397 912 1395 930 1378 937 1373 960 1365 970 1355 985 1344 1003 1354 1014 1365 1018 1340 1024 1325 1022 1310 1027 1300 1024 1295 1028 1290 1024 1265 1027 1240 1043 1215 1058 1197 1080 1190 1105 1180 1120 1172 1123 1165 1135 1150 1152 1140 1156 1130 1148 1120 1140 1105 1141 1090 1138 1075 1145 1065 1159 1040 1160 1028 1155 1020 1152 960 1153 945 1159 920 1153 900 1155 885 1151 870 1153 855 1151 845 1155 800 1157 785 1172 773 1177 765 1187 750 1191 722 1189 690 1197 678 1205 670 1222 658 1240 645 1240 642 1256 618 1264 605 1256 590 1253 575 1240 550 1236 535 1220 526 1205 520 1195 528 1190 524 1182 510 1175 498 1172 488 1154 500 1145 495 1130 488 1125 480 1115 465 1107 435 1095 415 1086 423 1070 411 1080 405 1070 408 1082 385 1080 380 1075 378 1081 345 1084 338 1065 337 1045 328 1028 340 1000 355 988 368 963 385 957 402 957 412 930 388 932 375 915 357 890 365 855 395 830 411 803 403 791 383 790 368 775 357 755 357 740 323 709 345 710 365 707 400 705 408 683 418 675 424 653 415 638 402 630 405 620 425 613 436 600 430 590 434 570 431 540 434 520 417 500 435 495 445 478 458 466 480 463 505 445 510 435 527 412 515 402 498 398 475 400 472 388 477 370 470 357 440 359 435 350 430 357 385 352 376 354 372 368 345 373 330 373 325 368 318 374 297 366 268 372 265 362 262 372 232 378 222 362 238 343 224 338 220 328 180 338 155 342 118 368 116 328 122 318 157 300 154 296 125 313 115 318 110 305 148 285 115 295 105 290 120 278 128 265 125 255 137 248 118 252 90 267 85 255 100 235 115 225 105 235 80 232 75 212 68 210z"/>
    <path d="M1832 717l13-5 40-27 30-15 30-7-8 12 15 12 18 10 15-5 15 5-2 15-20 25-15 20-25 13-15-16-27-2-8-22-20-6-15 14-15-7zM2055 648l25-2 15-5 15 8 20 11 2 24-17-6-25-13-32-1zM1658 812l15-2 12-15 30-5 3 12-11 1-7 14-15 12-30-4-3-8zM1685 848l8 8 20 2-24 4z"/>
    <path d="M1565 565l20-6-8 10-12 0M1345 1010l15-20 5 20-8-6-4 8M1825 715l10 5M1650 808l12 4M1718 800l8 1M1685 830l10 18M1925 775l3 3-4 9M90 262l35 6-15 20 15-25M100 260l20 20M115 290l15 10-15 25M508 1185l12 12 8-8-14-4M645 1280l20 2-5 2-10-3zM1958 662l-3 14" fill="none" stroke-width="6"/>
    <g fill="#232323" stroke-width="1"><circle cx="1577" cy="671" r="3"/><circle cx="1776" cy="277" r="4"/><circle cx="1402" cy="935" r="4"/><circle cx="1375" cy="1012" r="2"/><circle cx="1009" cy="1275" r="3"/><circle cx="1023" cy="1373" r="6"/><circle cx="1102" cy="1391" r="4"/><circle cx="817" cy="1392" r="2.500"/><circle cx="877" cy="1386" r="2.500"/></g>
    </g>
  </svg>
</section>
</main>

<footer class="status">
  <div class="loc"><svg viewBox="0 0 16 16"><circle cx="6.500" cy="6.500" r="5" fill="none" stroke="#888" stroke-width="1.600"/><path d="M10 10l5 5" stroke="#888" stroke-width="2"/></svg><span>Type to locate (Ctrl+K)</span></div>
  <span class="w-coord">Coordinate</span><div class="box b-coord">36.08°, -11.7°</div>
  <svg class="mouse" viewBox="0 0 20 20"><path d="M1 4q3-5 7-3l5 9-6 4z" fill="#222"/><path d="M5 2l6 9M2 7l6-4M4 10l6-4" stroke="#eee"/><circle cx="12" cy="14" r="5" fill="#fff" stroke="#222" stroke-width="1.700"/><path d="M12 11v4M15 4l3-3M10 15l4 1" stroke="#222" stroke-width="1.500"/></svg>
  <span class="w-scale">Scale</span><div class="box b-scale"><span>1:5743302</span><i></i></div>
  <svg class="lock" viewBox="0 0 16 20"><path d="M4 10V5q0-4 4-4t4 4v5" fill="none" stroke="#888" stroke-width="2"/><rect x="1" y="8.500" width="14" height="11" rx="1.500" fill="#555"/></svg>
  <span class="w-mag">Magnifier</span><div class="box spin">100%<i></i></div>
  <span class="w-rot">Rotation</span><div class="box spin rot">0.0 °<i></i></div>
  <b class="ck"><svg viewBox="0 0 17 17"><path d="M4 8l3.500 5L12.500 3" fill="none" stroke="#000" stroke-width="2"/></svg></b><span class="w-ren">Render</span>
  <svg class="globe" viewBox="0 0 20 20"><circle cx="10" cy="9" r="8" fill="#aaa" fill-opacity=".4" stroke="#666" stroke-width="1.300"/><path d="M2 9h16M10 1v18M4 5h12M4 13h12M10 1q-8 8 0 16q8-8 0-16M5 19h10" stroke="#666" stroke-width="1.200" fill="none"/></svg><span class="w-epsg">EPSG:4326</span>
  <svg class="log" viewBox="0 0 20 20"><path d="M10 1.500c5 0 9 3 9 7.500s-2 5-3 6l1 4-4-3c-8 1.500-12-2.500-12-7s4-7.500 9-7.500z" fill="#4a4a4a"/><path d="M5 9h2M9 9h2M13 9h2" stroke="#fff" stroke-width="2"/></svg>
</footer>

<footer class="task">
  <svg class="moon" viewBox="0 0 28 28"><circle cx="13.500" cy="13.500" r="13" fill="url(#gMoon)"/><path d="M15 22a4 4 0 0 1 1-7q2-5 7-1c5 0 6 8 1 8z" fill="#e9edf1"/></svg>
  <svg class="win" viewBox="0 0 30 30"><path d="M1 1h13.500v13.500H1zM15.500 1H29v13.500H15.500zM1 15.500h13.500V29H1zM15.500 15.500H29V29H15.500z" fill="url(#gWin)"/></svg>
  <div class="search"><svg viewBox="0 0 20 20"><circle cx="11" cy="8" r="6.500" fill="none" stroke="#222" stroke-width="1.900"/><path d="M6.500 13L2 18" stroke="#222" stroke-width="2"/></svg><span>Search</span></div>
  <div class="apps">
    <span><svg viewBox="0 0 30 30"><rect x="8" y="1" width="21" height="19" rx="1.500" fill="#f0f0f0"/><rect x="1" y="8" width="21" height="20" rx="1.500" fill="#5c5c5c"/><path d="M8 8h14v12H8z" fill="#aaa"/></svg></span>
    <span><svg viewBox="0 0 30 30"><path d="M11.500 1h7l1.200 4.500 3 1.700L27 6l3 6-3 3 3 3-3 6-4.300-1.200-3 1.700-1.200 4.500h-7l-1.200-4.500-3-1.700L3 24l-3-6 3-3-3-3 3-6 4.300 1.200 3-1.700z" fill="#808a93" stroke="#808a93" stroke-width="1" stroke-linejoin="round"/><circle cx="15" cy="15" r="6" fill="#0d62b3" stroke="#eef3f6" stroke-width="2.200"/></svg></span>
    <span><svg viewBox="0 0 30 30"><path d="M5 11L18 1l11 8v15q0 4-4 4H9q-4 0-4-4z" fill="#1590df"/><path d="M14 28l15-16v12q0 4-4 4z" fill="#50d9ff"/><path d="M17 14l10-9 2 4-8 9z" fill="#0a4ea0"/><rect x="0" y="10" width="14" height="14" rx="1.500" fill="#0f6cbd"/><circle cx="7" cy="17" r="3.700" fill="none" stroke="#fff" stroke-width="2.300"/></svg></span>
    <span class="run"><svg viewBox="0 0 30 30"><path d="M0 4q0-2 2-2h8l3 4H0z" fill="#e0a007"/><path d="M0 6h28q2 0 2 2v18q0 2-2 2H2q-2 0-2-2z" fill="url(#gFold)"/><path d="M5 28v-5q0-2 2-2h16q2 0 2 2v5z" fill="#0f74c9"/><path d="M10 25h10" stroke="#064a86" stroke-width="1.500"/></svg></span>
    <span class="run"><svg viewBox="0 0 30 30"><circle cx="15" cy="15" r="14.500" fill="#2a9f4b"/><path d="M15 .5A14.500 14.500 0 0 1 27.600 7.700H15v7.300L8.700 18.600 2.400 7.700A14.500 14.500 0 0 1 15 .5z" fill="#e33b2e"/><path d="M27.600 7.700A14.500 14.500 0 0 1 14 29.500L21.500 18 15 7.700z" fill="#fbc116"/><circle cx="15" cy="15" r="6.700" fill="#3e82f0" stroke="#fff" stroke-width="1.700"/></svg></span>
    <span><svg viewBox="0 0 30 30"><circle cx="15" cy="15" r="14.500" fill="#1fd760"/><path d="M6 10.500q10-3 18.500 1.500M7 15.500q9-2.500 16 1.500M8 20q7-2 13 1.500" fill="none" stroke="#111" stroke-width="2.700" stroke-linecap="round"/></svg></span>
    <span><svg viewBox="0 0 30 30"><circle cx="16" cy="6" r="4.500" fill="#7b83eb"/><circle cx="25" cy="7" r="3.500" fill="#5059c9"/><path d="M9 12h19q2 0 2 2v7q-2 7-10 7-8 0-11-8z" fill="#7178dc"/><rect x="0" y="11" width="14" height="14" rx="1.500" fill="#4b53bc"/><text x="3" y="22" class="t-app">T</text><circle cx="23" cy="22" r="7.500" fill="#b8c9be"/><circle cx="23" cy="20" r="3" fill="#704034"/><path d="M18 28q5-9 10 0z" fill="#9a2f36"/></svg></span>
    <span class="run"><svg viewBox="0 0 30 30"><path d="M7 1h22v7.500H7z" fill="#41a5ee"/><path d="M7 8h22v7H7z" fill="#2b7cd3"/><path d="M7 15h22v7H7z" fill="#185abd"/><path d="M7 22h22v6.500H7z" fill="#103f91"/><rect x="0" y="8" width="14" height="14" rx="1.500" fill="#185abd"/><text x="1.500" y="19" class="t-app">W</text></svg></span>
    <span class="run"><svg viewBox="0 0 30 30"><circle cx="16" cy="15" r="13.500" fill="#d35230"/><path d="M16 15V1.500A13.500 13.500 0 0 1 29.500 15z" fill="#ff8f6b"/><path d="M16 15V1.500A13.500 13.500 0 0 0 2.500 15z" fill="#ed6c47"/><rect x="0" y="8" width="14" height="14" rx="1.500" fill="#c43e1c"/><text x="3" y="19" class="t-app">P</text></svg></span>
    <span class="act"><svg viewBox="0 0 30 30"><use href="#qgis" width="30" height="30"/></svg></span>
  </div>
  <div class="tray">
    <svg class="chev" viewBox="0 0 14 10"><path d="M1 8l6-6 6 6" fill="none" stroke="#fff" stroke-width="1.700"/></svg>
    <svg class="od" viewBox="0 0 20 18"><path d="M5 15q-4-1-4-4t4-4q2-5 7-3 4 2 4 5 3 0 3 3t-3 3z" fill="#8d979d"/><path d="M3 1l15 15" stroke="#17282c" stroke-width="3"/><path d="M3 1l15 15" stroke="#ddd" stroke-width="1.300"/></svg>
    <span class="por">POR</span>
    <svg class="wifi" viewBox="0 0 20 18"><path d="M1 7q9-9 18 0M4 10q6-6.500 12 0M7 13q3-3.500 6 0" fill="none" stroke="#fff" stroke-width="1.700"/><circle cx="10" cy="15" r="1.700" fill="#fff"/></svg>
    <svg class="spk" viewBox="0 0 20 18"><path d="M1 6.500h3.500L10 2v14l-5.500-4.500H1zM13 6.500l5.500 5.500M18.500 6.500L13 12" fill="none" stroke="#fff" stroke-width="1.400"/></svg>
    <svg class="bat" viewBox="0 0 20 14"><rect x="1" y="1.500" width="15.500" height="11" rx="2.500" fill="none" stroke="#fff" stroke-width="1.400"/><rect x="3.500" y="4" width="7" height="6" rx="1" fill="#fff"/><path d="M18.300 5v4" stroke="#fff" stroke-width="1.700"/></svg>
    <div class="clk"><span>3:54 PM</span><span>5/28/2025</span></div>
    <svg class="bell" viewBox="0 0 20 22"><path d="M2 17l1.500-3V8q0-6 6-6h3l4 8v4l1.500 3zM7 18h5q-2.500 4-5 0z" fill="#fff"/><path d="M7 6h4L7 12h4" stroke="#17282c" stroke-width="1.400" fill="none"/><path d="M13 2h4l-4 5h4" stroke="#fff" stroke-width="1.400" fill="none"/></svg>
  </div>
</footer>
</div>
</body>
</html>
```
FILE: styles.css
```css
* { box-sizing: border-box; }
html, body { margin: 0; width: 1920px; height: 1080px; overflow: hidden; }
body { font: 14.6px/20px "Open Sans", "Noto Sans", sans-serif; letter-spacing: -0.35px; color: #000; background: #efefef; }
svg { flex: none; display: block; overflow: visible; }
i { flex: none; display: block; }
.grads { width: 0; height: 0; }
.defs { display: none; }
.app { display: flex; flex-direction: column; width: 1920px; height: 1080px; }

.t-a { font: 16px "DejaVu Sans", sans-serif; letter-spacing: 0; fill: #333; }
.t-11 { font: bold 11.5px "Liberation Sans", sans-serif; letter-spacing: -.6px; fill: #222; }
.t-i { font: italic bold 19px "Liberation Serif", serif; fill: #fff; }
.t-i2 { font: italic bold 15px "Liberation Serif", serif; fill: #fff; }
.t-abc { font: bold 9.5px "DejaVu Sans", sans-serif; letter-spacing: -.5px; fill: #222; }
.t-red { font: bold 9.5px "DejaVu Sans", sans-serif; letter-spacing: -.5px; fill: #f00; }
.t-q { font: 21px "Liberation Serif", serif; fill: #fff; }
.t-crs { font: bold 18px "Open Sans", sans-serif; fill: #555; }
.t-app { font: bold 11.5px "Open Sans", sans-serif; letter-spacing: 0; fill: #fff; }

.titlebar { height: 29px; flex: none; display: flex; align-items: center; padding-left: 2px; background: linear-gradient(90deg, #f8eef8, #faeff0 12%, #fbf0ee 50%, #f3f0f8 78%, #f7f0f8); }
.logo { width: 20px; height: 20px; }
.caption { margin: -1px 0 0 7px; letter-spacing: -.18px; }
.wbtns { width: 180px; height: 29px; margin-left: auto; margin-right: 0; }

.menu { height: 26px; flex: none; display: grid; grid-template-columns: 64px 43px 50px 53px 71px 67px 59px 59px 80px 48px 54px 60px; padding: 2px 0 0 13px; border-bottom: 2px solid #d6d6d6; line-height: 20px; letter-spacing: -.3px; }
.menu u { text-underline-offset: 2px; text-decoration-thickness: 1px; }

.toolbar { height: 48px; flex: none; display: flex; align-items: center; background: linear-gradient(#fbfbfb, #eeeeee); border-bottom: 1px solid #b4b4b4; }
.toolbar.second { height: 49px; padding-top: 2px; }
.toolbar > svg { width: 30px; height: 30px; margin: 0 5.620px; }
.toolbar > .h { width: 20px; height: 22px; position: relative; }
.toolbar > .h::after { content: ""; position: absolute; left: 10px; top: 0; width: 10px; height: 22px; background: radial-gradient(circle, #b5b5b5 .8px, transparent 1.100px) 0 0 / 5px 4.400px; }
.toolbar > .h:first-child { margin-left: -4px; }
.toolbar > .on { background: #d9d9d9; outline: 4px solid #d9d9d9; border-radius: 3px; box-shadow: 0 0 0 5px #a8a8a8; }
.off { opacity: .34; }
.d { width: 15.400px; height: 5px; background: #4c4c4c; clip-path: polygon(2px 0, 11px 0, 6.500px 5px); }
.d.dim { opacity: .55; }
.toolbar > .s { width: 1px; height: 24px; margin: 0 4.800px 0 3px; background: #c9c9c9; }

.work { flex: 1; min-height: 0; display: flex; padding-top: 1px; }
.docks { width: 386px; display: flex; flex-direction: column; }
.dock { display: flex; flex-direction: column; }
.grow { flex: 1; min-height: 0; }
.dtitle { height: 25px; display: flex; align-items: center; padding: 0 2px 2px 5px; flex: none; }
.dtitle span { flex: 1; }
.dtitle svg { width: 14px; height: 14px; margin-left: 4px; }
.dtools { height: 37px; display: flex; align-items: center; flex: none; padding: 0 0 3px 10px; gap: 11.300px; }
.dtools svg { width: 20px; height: 20px; }
.dtools .d { margin: 0 -5px 0 -7px; }
.dtitle.l { height: 26px; padding-bottom: 3px; }
.dtools.l { height: 37px; padding-bottom: 6px; }
.tree { background: #fff; border: 1px solid #b4b4b4; }
.browser { height: 270px; display: flex; overflow: hidden; }
.rows { flex: 1; padding-top: 1px; }
.row { height: 22.500px; display: flex; align-items: center; letter-spacing: -.3px; }
.row i { width: 21px; height: 9px; margin-right: 3px; }
.row svg { width: 20px; height: 20px; margin-right: 7px; }
.row span { margin-top: -1px; }
.sub { padding-left: 20px; }
.c { background: #5a5a5a; clip-path: polygon(7px 0, 13px 4.500px, 7px 9px); }
.o { background: #5a5a5a; clip-path: polygon(5px 1px, 15px 1px, 10px 6px); }
.scroll { width: 17px; display: flex; flex-direction: column; border-left: 1px solid #dcdcdc; }
.scroll b { display: block; }
.up, .down { height: 17px; background: #f4f4f4; border-bottom: 1px solid #b4b4b4; }
.up::after, .down::after { content: ""; display: block; width: 9px; height: 5px; margin: 6px 3px; background: #555; clip-path: polygon(0 100%, 50% 0, 100% 100%); }
.down { border-bottom: 0; border-top: 1px solid #b4b4b4; }
.down::after { clip-path: polygon(0 0, 50% 100%, 100% 0); }
.thumb { height: 48px; background: linear-gradient(90deg, #fff, #f0f0f0); border-bottom: 1px solid #b4b4b4; }
.track { flex: 1; background: #e4e4e4; }
.split { height: 8px; flex: none; background: radial-gradient(circle, #aaa .8px, transparent 1.100px) 185px 1px / 4px 5px; clip-path: inset(0 180px 3px 185px); }
.layers { flex: 1; }
.lay { height: 22.500px; display: flex; align-items: center; color: #7c7c7c; font-weight: bold; font-style: italic; letter-spacing: .15px; }
.lay span { margin-top: -1px; }
.lay.vec { letter-spacing: .5px; }
.lay.vis { color: #000; font-style: normal; letter-spacing: -.4px; }
.lay.vis.vec { letter-spacing: 0; }
.lay > i { width: 20px; height: 9px; margin-right: 9px; }
.lay > .c { clip-path: polygon(10px 0, 15px 4.500px, 10px 9px); }
.ck { display: block; flex: none; width: 18px; height: 18px; background: #fff; border: 1px solid #b4b4b4; }
.ck svg { width: 17px; height: 17px; margin-left: -1px; }
.sw { width: 20px; height: 20px; margin: 0 7px 0 7px; border: 1px solid #333; flex: none; }
.prt { background: #b54a4c; }
.esp { background: #f4a5b1; }
.ita { background: #e9708e; }
.grc { background: #d3b438; }
.lay > svg { width: 17px; height: 17px; margin: 0 8px 0 9px; }
.lay > .q { width: 21px; height: 21px; margin: 0 6px 0 auto; }
.cur { text-decoration: underline; text-decoration-thickness: 1px; text-underline-offset: 3px; }
.vsplit { width: 9px; background: radial-gradient(circle, #aaa .8px, transparent 1.100px) 2px 0 / 5px 4px; clip-path: inset(407px 2px 403px 2px); }

.center { flex: 1; display: flex; flex-direction: column; background: #fff; border-bottom: 1px solid #b4b4b4; }
.msg { height: 35px; flex: none; display: flex; align-items: center; background: #e7f5fe; border: 1px solid #b9d3e4; padding-left: 12px; }
.bub { width: 28px; height: 26px; margin: -2px 12px 0 0; }
.msg span { font-size: 12.500px; color: #0f4aa0; letter-spacing: -.26px; margin-top: 4px; flex: 1; }
.msg button { width: 104px; height: 27px; padding: 0 0 2px; margin-top: -1px; font: 13px "Open Sans", sans-serif; letter-spacing: -.45px; background: linear-gradient(#fdfdfd, #efefef); border: 1px solid #a8a8a8; border-radius: 2px; color: #000; }
.msg .x { width: 22px; height: 22px; margin: -2px 27px 0 38px; }
.map { width: 1525px; height: 796px; flex: none; overflow: hidden; }

.status { height: 35px; flex: none; display: flex; align-items: center; padding: 1px 0 0 5px; font-size: 13.300px; letter-spacing: -.42px; white-space: nowrap; }
.loc { width: 250px; height: 27px; display: flex; align-items: center; border: 1px solid #a8a8a8; border-radius: 3px; background: #fff; color: #777; padding-left: 11px; margin-right: 689px; font-size: 12.600px; letter-spacing: -.2px; }
.loc svg { width: 16px; height: 16px; margin-right: 9px; }
.status > span { flex: none; overflow: visible; }
.box { flex: none; height: 27px; line-height: 25px; background: #fff; border: 1px solid #a8a8a8; border-radius: 3px; position: relative; }
.w-coord { width: 70px; }
.b-coord { width: 113px; text-align: center; font-size: 14px; letter-spacing: 0; }
.mouse { width: 20px; height: 20px; margin: 0 17px 0 5px; }
.w-scale { width: 36px; }
.b-scale { width: 96px; overflow: hidden; display: flex; }
.b-scale span { width: 70px; display: flex; justify-content: flex-end; padding-right: 5px; overflow: hidden; letter-spacing: 0; border-right: 1px solid #b4b4b4; }
.b-scale i { flex: 1; background: #555; clip-path: polygon(6px 10px, 15px 10px, 10.500px 16px); }
.lock { width: 16px; height: 20px; margin: 0 10px 0 15px; }
.w-mag { width: 61px; }
.spin { width: 101px; padding-left: 5px; }
.spin i { position: absolute; right: 0; top: 0; width: 17px; height: 25px; border-left: 1px solid #c9c9c9; }
.spin i::before { content: ""; position: absolute; left: 3px; top: 5px; width: 9px; height: 15px; background: #555; clip-path: polygon(0 5px, 50% 0, 100% 5px, 0 5px, 0 10px, 100% 10px, 50% 100%, 0 10px); }
.w-rot { width: 63px; margin-left: 11px; }
.status .ck { margin: 0 6px 0 7px; }
.w-ren { width: 63px; }
.globe { width: 19px; height: 19px; margin-right: 3px; }
.w-epsg { width: 96px; letter-spacing: 0; }
.log { width: 20px; height: 20px; }

.task { height: 60px; flex: none; display: flex; align-items: center; color: #fff; border-top: 1px solid #3c484b; background: linear-gradient(90deg, #182330, #16292f 10%, #182e28 14.500%, #1d2b25 19%, #1c2a26 29%, #142a2c 34%, #172a33 42%, #15292e 54%, #172d23 61%, #142c2c 71%, #152a2c 80%, #182730 92%, #20222d); }
.moon { width: 28px; height: 28px; margin: -1px 0 0 28px; }
.win { width: 31px; height: 31px; margin: 0 17px 0 473px; }
.search { width: 273px; height: 39px; border-radius: 20px; background: #f1f3f3; color: #5b6164; display: flex; align-items: center; padding-left: 13px; font-size: 17px; letter-spacing: -.2px; }
.search svg { width: 20px; height: 20px; margin-right: 12px; }
.apps { display: flex; margin-left: 3.500px; height: 60px; align-items: center; }
.apps span { width: 55px; height: 60px; display: flex; align-items: center; justify-content: center; position: relative; }
.apps svg { width: 29px; height: 29px; }
.run::after, .act::after { content: ""; position: absolute; bottom: 6px; width: 8px; height: 4px; border-radius: 2px; background: #8e9698; }
.act::after { width: 20px; background: #4cc2ff; }
.act::before { content: ""; position: absolute; inset: 5px 2px; border-radius: 5px; background: rgba(255,255,255,.09); border: 1px solid rgba(255,255,255,.08); }
.act svg { position: relative; }
.tray { flex: 1; display: flex; align-items: center; font-size: 14.400px; letter-spacing: -.4px; }
.chev { width: 14px; height: 10px; margin-left: 160px; }
.od { width: 20px; height: 18px; margin: 0 24px 0 24px; }
.por { width: 51px; }
.wifi { width: 20px; height: 18px; margin-right: 9px; }
.spk { width: 20px; height: 18px; margin-right: 11px; }
.bat { width: 20px; height: 14px; }
.clk { width: 90px; margin-top: -2px; display: flex; flex-direction: column; align-items: flex-end; line-height: 19.500px; font-size: 14.600px; letter-spacing: -.05px; }
.bell { width: 18px; height: 20px; margin-left: 10px; }
```
